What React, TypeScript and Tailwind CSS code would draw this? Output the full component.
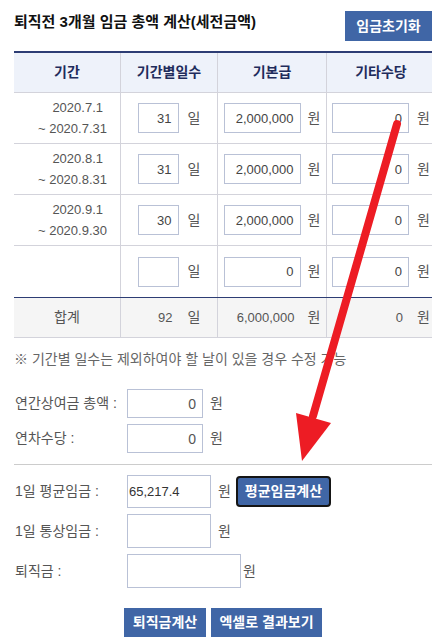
import React from "react";

type Row = {
	from?: string;
	to?: string;
	days: string;
	base: string;
	extra: string;
};

const ROWS: Row[] = [
	{ from: "2020.7.1", to: "~ 2020.7.31", days: "31", base: "2,000,000", extra: "0" },
	{ from: "2020.8.1", to: "~ 2020.8.31", days: "31", base: "2,000,000", extra: "0" },
	{ from: "2020.9.1", to: "~ 2020.9.30", days: "30", base: "2,000,000", extra: "0" },
	{ days: "", base: "0", extra: "0" },
];

const GRID = "grid grid-cols-[106px_97px_109px_109px]";
const cellInput =
	"h-[30px] border border-[#b9c1d6] bg-white text-right pr-[6px] text-[13px] text-[#444] outline-none";

const Cell = ({ children, first }: { children: React.ReactNode; first?: boolean }) => (
	<div className={`flex items-center justify-center ${first ? "" : "border-l border-[#d3d3db]"}`}>{children}</div>
);

const FormRow = ({
	label,
	value,
	inputClass,
	unitClass,
	children,
}: {
	label: string;
	value: string;
	inputClass: string;
	unitClass?: string;
	children?: React.ReactNode;
}) => (
	<div className="flex items-center">
		<span className="w-[113px] pl-[1px] text-[14px] text-[#555]">{label}</span>
		<input readOnly defaultValue={value} className={inputClass} />
		<span className={`text-[14px] text-[#555] ${unitClass ?? "ml-[7px]"}`}>원</span>
		{children}
	</div>
);

export default function App() {
	return (
		<div
			className="relative w-[446px] h-[642px] bg-white overflow-hidden px-[14px] pt-[11px]"
			style={{ fontFamily: '"Liberation Sans", "Noto Sans CJK KR", sans-serif' }}
		>
			{/* title */}
			<div className="flex items-start justify-between">
				<h1 className="mt-[1px] text-[15px] font-bold text-[#111] leading-[20px]">
					퇴직전 3개월 임금 총액 계산(세전금액)
				</h1>
				<button className="w-[87px] h-[30px] bg-[#4066a6] text-white text-[14px] font-bold">임금초기화</button>
			</div>

			{/* table */}
			<div className="mt-[10px] border-t-2 border-[#2d3d74]">
				<div className={`${GRID} h-[40px] bg-[#eef2fa] border-b border-[#d3d3db] text-[14px] font-bold text-[#1f2c5c]`}>
					<Cell first>기간</Cell>
					<Cell>기간별일수</Cell>
					<Cell>기본급</Cell>
					<Cell>기타수당</Cell>
				</div>
				{ROWS.map((r, i) => (
					<div
						key={i}
						className={`${GRID} h-[51px] ${i === ROWS.length - 1 ? "" : "border-b border-[#d3d3db]"}`}
					>
						<div className="flex flex-col items-end justify-center pr-[13px] text-[13px] leading-[21px] text-[#555]">
							{r.from && <span className="pr-[4px]">{r.from}</span>}
							{r.to && <span>{r.to}</span>}
						</div>
						<Cell>
							<input readOnly defaultValue={r.days} className={`${cellInput} w-[41px]`} />
							<span className="ml-[9px] text-[14px] text-[#555]">일</span>
						</Cell>
						<Cell>
							<input readOnly defaultValue={r.base} className={`${cellInput} w-[77px]`} />
							<span className="ml-[7px] text-[14px] text-[#555]">원</span>
						</Cell>
						<Cell>
							<input readOnly defaultValue={r.extra} className={`${cellInput} w-[77px]`} />
							<span className="ml-[8px] text-[14px] text-[#555]">원</span>
						</Cell>
					</div>
				))}
				<div className={`${GRID} h-[41px] bg-[#f5f5f5] border-t border-[#2d3d74] border-b border-b-[#d3d3db] text-[13px] text-[#555]`}>
					<Cell first>
						<span className="text-[14px]">합계</span>
					</Cell>
					<Cell>
						<span className="w-[41px] text-right pr-[6px]">92</span>
						<span className="ml-[9px] text-[14px]">일</span>
					</Cell>
					<Cell>
						<span className="w-[77px] text-right pr-[6px]">6,000,000</span>
						<span className="ml-[7px] text-[14px]">원</span>
					</Cell>
					<Cell>
						<span className="w-[77px] text-right pr-[6px]">0</span>
						<span className="ml-[8px] text-[14px]">원</span>
					</Cell>
				</div>
			</div>

			<p className="mt-[11px] text-[14px] leading-[20px] text-[#666]">
				※ 기간별 일수는 제외하여야 할 날이 있을 경우 수정 가능
			</p>

			{/* bonus */}
			<div className="mt-[20px] flex flex-col gap-[6px]">
				<FormRow
					label="연간상여금 총액 :"
					value="0"
					inputClass="w-[76px] h-[29px] border border-[#b9c1d6] text-right pr-[6px] text-[14px] text-[#555] outline-none"
				/>
				<FormRow
					label="연차수당 :"
					value="0"
					inputClass="w-[76px] h-[29px] border border-[#b9c1d6] text-right pr-[6px] text-[14px] text-[#555] outline-none"
				/>
			</div>

			<div className="mt-[11px] border-t border-[#cccccc]" />

			{/* results */}
			<div className="mt-[10px] flex flex-col gap-[6px]">
				<FormRow
					label="1일 평균임금 :"
					value="65,217.4"
					inputClass="w-[84px] h-[33px] border border-[#b9c1d6] pl-[1px] text-[13px] text-[#333] outline-none"
				>
					<button className="ml-[5px] w-[95px] h-[31px] rounded-[4px] border-2 border-[#151515] bg-[#4066a6] text-white text-[14px] font-bold">
						평균임금계산
					</button>
				</FormRow>
				<FormRow
					label="1일 통상임금 :"
					value=""
					inputClass="w-[84px] h-[34px] border border-[#b9c1d6] text-[13px] outline-none"
				/>
				<FormRow
					label="퇴직금 :"
					value=""
					unitClass="ml-[2px]"
					inputClass="w-[114px] h-[34px] border border-[#b9c1d6] text-[13px] outline-none"
				/>
			</div>

			<div className="mt-[20px] flex justify-center gap-[5px]">
				<button className="w-[82px] h-[29px] bg-[#4066a6] text-white text-[14px] font-bold">퇴직금계산</button>
				<button className="w-[111px] h-[29px] bg-[#4066a6] text-white text-[14px] font-bold">엑셀로 결과보기</button>
			</div>

			{/* red annotation arrow */}
			<svg
				className="pointer-events-none absolute left-0 top-0 w-[446px] h-[642px]"
				viewBox="0 0 446 642"
			>
				<line x1="397" y1="124" x2="313" y2="416" stroke="#ed1c24" strokeWidth="8" strokeLinecap="round" />
				<polygon points="296,413 331,423 302,461" fill="#ed1c24" />
			</svg>
		</div>
	);
}
